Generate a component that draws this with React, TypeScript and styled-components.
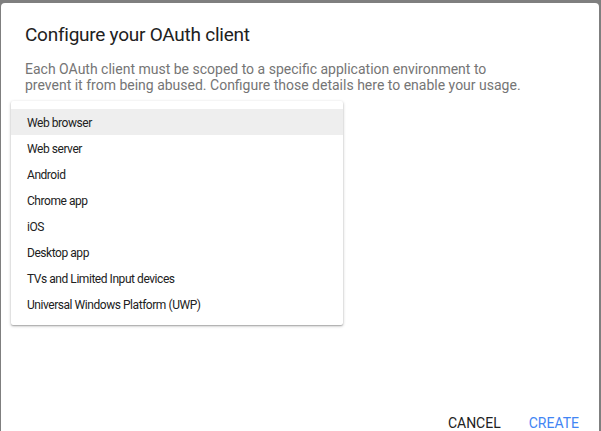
import React from 'react';
import styled, { createGlobalStyle } from 'styled-components';

const GlobalStyle = createGlobalStyle`
  html, body {
    margin: 0;
    padding: 0;
    width: 601px;
    height: 431px;
    overflow: hidden;
    background: #7f7f7f;
    font-family: Roboto, "Liberation Sans", Arial, sans-serif;
  }
`;

const Backdrop = styled.div`
  width: 601px;
  height: 431px;
  background: #7f7f7f;
  padding: 3px 2px 0 1px;
  box-sizing: border-box;
  overflow: hidden;
`;

const Dialog = styled.div`
  background: #fff;
  border-radius: 4px;
  height: 440px;
  box-sizing: border-box;
  display: flex;
  flex-direction: column;
  padding: 20px 0 0 0;
`;

const Title = styled.h2`
  margin: 0 0 0 24px;
  font-size: 19px;
  letter-spacing: -0.25px;
  font-weight: 400;
  color: #212121;
  line-height: 24px;
`;

const Description = styled.p`
  margin: 14px 0 0 24px;
  font-size: 14px;
  line-height: 16px;
  color: #757575;
  max-width: 500px;
`;

const Menu = styled.ul`
  list-style: none;
  margin: 8px 0 0 10px;
  padding: 8px 0;
  width: 332px;
  background: #fff;
  box-shadow: 0 1px 3px rgba(0, 0, 0, 0.3), 0 1px 1px rgba(0, 0, 0, 0.14);
  border-radius: 2px;
`;

const MenuItem = styled.li<{ $active?: boolean }>`
  height: 26px;
  display: flex;
  align-items: center;
  padding: 1px 16px 0;
  box-sizing: border-box;
  font-size: 12px;
  letter-spacing: -0.45px;
  color: #212121;
  background: ${p => (p.$active ? '#eeeeee' : 'transparent')};
`;

const Actions = styled.div`
  margin-top: auto;
  display: flex;
  justify-content: flex-end;
  gap: 8px;
  padding: 0 10px 2px 0;
`;

const Button = styled.button<{ $primary?: boolean }>`
  border: none;
  background: none;
  font-family: inherit;
  font-size: 14px;
  text-transform: uppercase;
  color: ${p => (p.$primary ? '#4285f4' : '#212121')};
  padding: 0 10px;
  height: 36px;
  line-height: 36px;
`;

const options = [
  'Web browser',
  'Web server',
  'Android',
  'Chrome app',
  'iOS',
  'Desktop app',
  'TVs and Limited Input devices',
  'Universal Windows Platform (UWP)',
];

export default function App() {
  return (
    <>
      <GlobalStyle />
      <Backdrop>
        <Dialog>
          <Title>Configure your OAuth client</Title>
          <Description>
            Each OAuth client must be scoped to a specific application environment to
            <br />
            prevent it from being abused. Configure those details here to enable your usage.
          </Description>
          <Menu>
            {options.map((o, i) => (
              <MenuItem key={o} $active={i === 0}>
                {o}
              </MenuItem>
            ))}
          </Menu>
          <Actions>
            <Button>Cancel</Button>
            <Button $primary>Create</Button>
          </Actions>
        </Dialog>
      </Backdrop>
    </>
  );
}
